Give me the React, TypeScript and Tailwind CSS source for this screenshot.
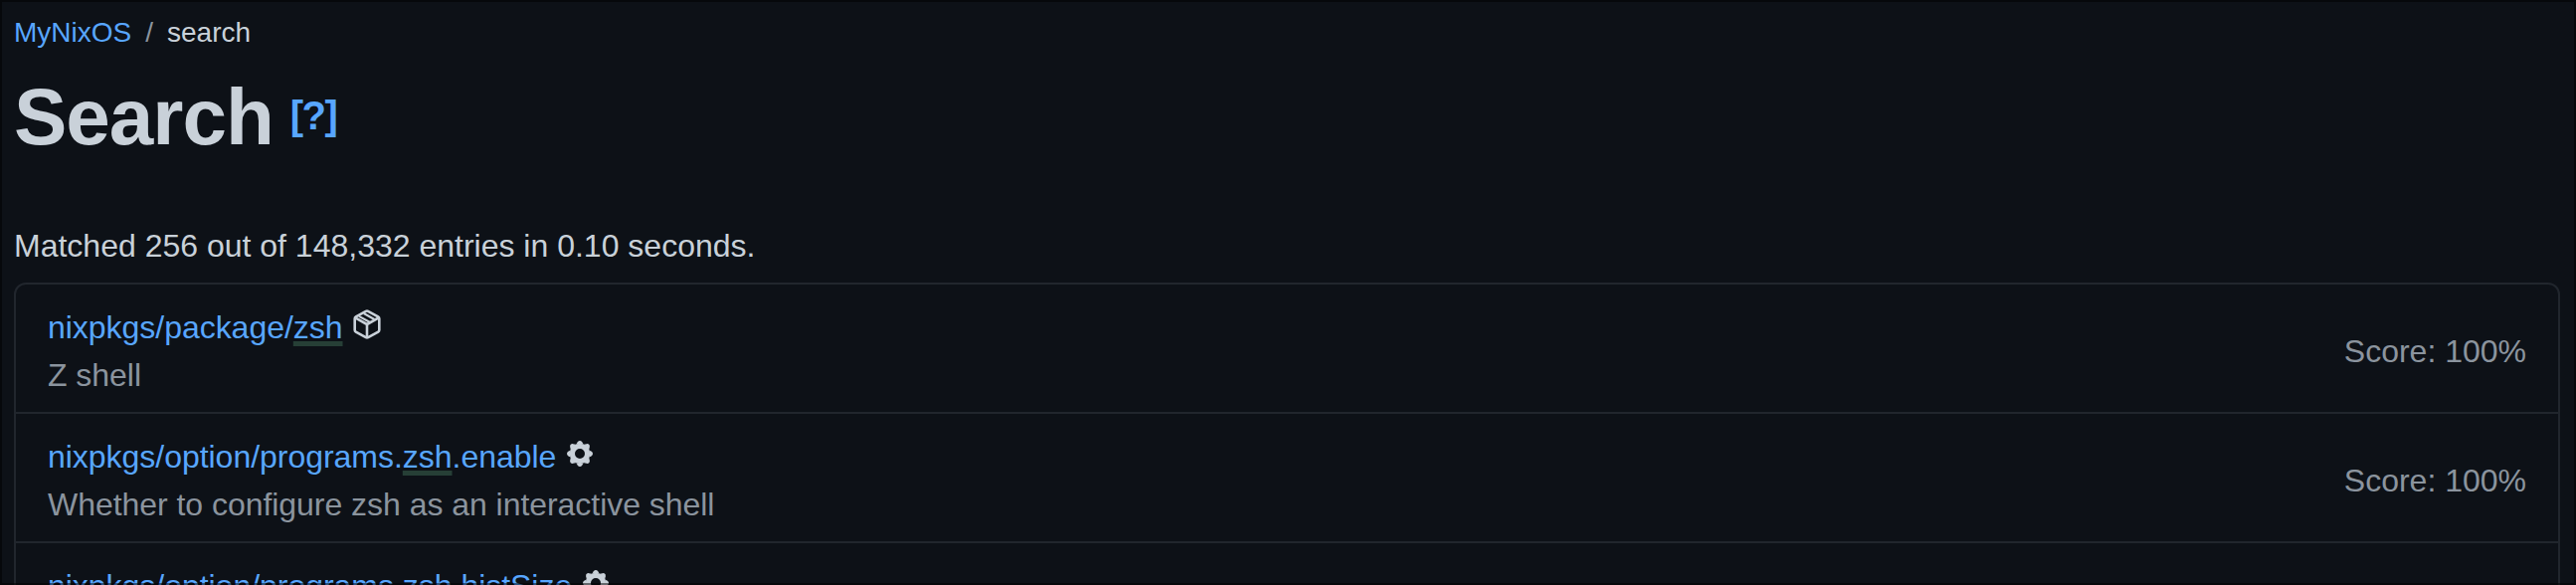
import React from 'react';

type Kind = 'package' | 'option';

interface Result {
  prefix: string;
  match: string;
  suffix: string;
  kind: Kind;
  description: string;
  score: number;
}

const results: Result[] = [
  { prefix: 'nixpkgs/package/', match: 'zsh', suffix: '', kind: 'package', description: 'Z shell', score: 100 },
  {
    prefix: 'nixpkgs/option/programs.',
    match: 'zsh',
    suffix: '.enable',
    kind: 'option',
    description: 'Whether to configure zsh as an interactive shell',
    score: 100,
  },
  { prefix: 'nixpkgs/option/programs.', match: 'zsh', suffix: '.histSize', kind: 'option', description: '', score: 100 },
];

function PackageIcon() {
  return (
    <svg
      viewBox="0 0 28 30"
      className="-mt-[7px] ml-[10px] h-[30px] w-7 shrink-0"
      fill="none"
      stroke="currentColor"
      strokeWidth="2.6"
      strokeLinejoin="round"
    >
      <path d="M12.9 1.8 Q14 1.2 15.1 1.8 L25.2 7.4 Q26.3 8 26.3 9.2 V20.8 Q26.3 22 25.2 22.6 L15.1 28.2 Q14 28.8 12.9 28.2 L2.8 22.6 Q1.7 22 1.7 20.8 V9.2 Q1.7 8 2.8 7.4 Z" />
      <path d="M2.2 8.3 L14 15 L25.8 8.3 M14 15 V28.4" />
      <path d="M10.8 4 L21.4 10 M5.9 6.8 L17 13" strokeWidth="2.1" />
    </svg>
  );
}

const teeth = [0, 45, 90, 135, 180, 225, 270, 315];

function GearIcon() {
  return (
    <svg viewBox="-13 -13 26 26" className="-mt-[7px] ml-[11px] size-[26px] shrink-0">
      <circle r="7.6" fill="none" stroke="currentColor" strokeWidth="5.2" />
      {teeth.map((angle) => (
        <path
          key={angle}
          transform={`rotate(${angle})`}
          d="M-3.6 -9.4 L-2.2 -11.7 Q-1.4 -13 0 -13 Q1.4 -13 2.2 -11.7 L3.6 -9.4 Z"
          fill="currentColor"
        />
      ))}
    </svg>
  );
}

function ResultRow({ result }: { result: Result }) {
  return (
    <li className="flex h-[130px] shrink-0 items-center justify-between border-b-2 border-[#21262d] px-8">
      <div className="h-24 pt-[3px]">
        <div className="flex h-12 items-center text-[#c9d1d9]">
          <a className="whitespace-nowrap tracking-[-0.03px] text-[#58a6ff]">
            {result.prefix}
            <span className="underline decoration-[#263f36] decoration-[5px] underline-offset-[3px]">{result.match}</span>
            {result.suffix}
          </a>
          {result.kind === 'package' ? <PackageIcon /> : <GearIcon />}
        </div>
        <p className="h-12 tracking-[-0.04px] text-[#8b949e]">{result.description}</p>
      </div>
      <span className="pt-[6px] text-[#8b949e]">Score: {result.score}%</span>
    </li>
  );
}

export default function App() {
  return (
    <div className="relative h-[588px] overflow-hidden bg-[#0d1117] pt-[12px] pr-4 pl-[14px] font-['Liberation_Sans',sans-serif] text-[32px] leading-[48px] text-[#c9d1d9]">
      <nav className="flex h-[42px] gap-[14px] text-[28px] leading-[42px]">
        <a className="text-[#58a6ff]">MyNixOS</a>
        <span className="text-[#8b949e]">/</span>
        <span>search</span>
      </nav>
      <header className="mt-[4px] flex h-[120px] items-center gap-[17px]">
        <h1 className="text-[80px] leading-[100px] font-bold tracking-[-1px]">Search</h1>
        <a className="-mt-[5px] text-[40px] leading-[60px] font-bold tracking-[-1.6px] text-[#58a6ff]">[?]</a>
      </header>
      <p className="mt-[45px] h-12">Matched 256 out of 148,332 entries in 0.10 seconds.</p>
      <ul className="mt-[13px] flex h-[440px] flex-col overflow-hidden rounded-xl border-2 border-[#21262d]">
        {results.map((result) => (
          <ResultRow key={result.prefix + result.suffix} result={result} />
        ))}
      </ul>
      <div className="pointer-events-none absolute inset-0 border-2 border-black/50" />
    </div>
  );
}
